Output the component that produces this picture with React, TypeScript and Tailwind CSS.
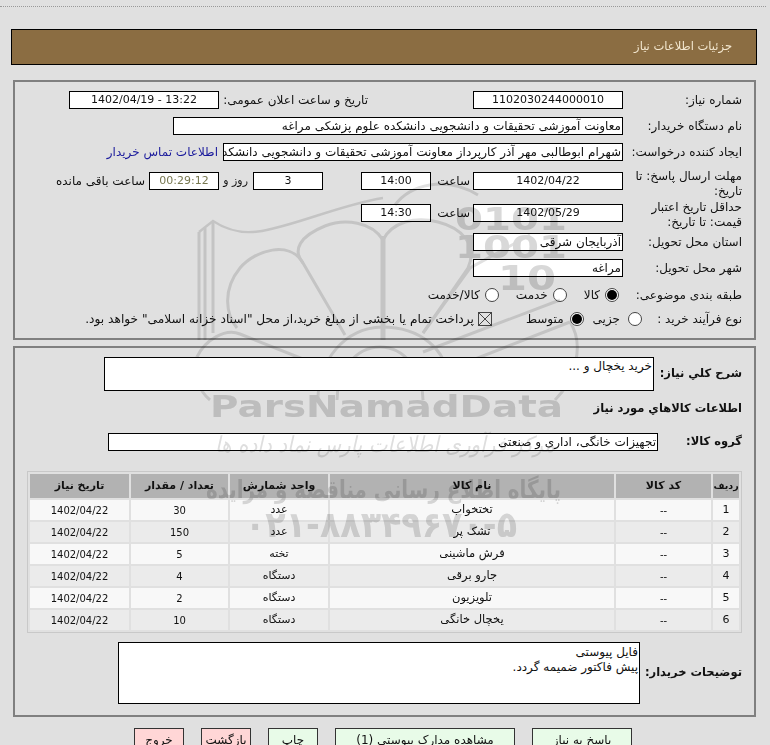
import type { ReactNode } from 'react'

const items = [
  { id: 1, code: '--', name: 'تختخواب', unit: 'عدد', qty: '30', date: '1402/04/22' },
  { id: 2, code: '--', name: 'تشک پر', unit: 'عدد', qty: '150', date: '1402/04/22' },
  { id: 3, code: '--', name: 'فرش ماشینی', unit: 'تخته', qty: '5', date: '1402/04/22' },
  { id: 4, code: '--', name: 'جارو برقی', unit: 'دستگاه', qty: '4', date: '1402/04/22' },
  { id: 5, code: '--', name: 'تلویزیون', unit: 'دستگاه', qty: '2', date: '1402/04/22' },
  { id: 6, code: '--', name: 'یخچال خانگی', unit: 'دستگاه', qty: '10', date: '1402/04/22' },
]

// Sits over the page and multiplies, so it shows through table rows and light fields
function Watermark() {
  return (
    <svg className="pointer-events-none absolute inset-0 z-20 mix-blend-multiply" width="770" height="745" viewBox="0 0 770 745" fill="none">
      <g stroke="#e0e0e0" strokeWidth="3">
        <path d="M199 232V340M205 228V340M213 221V333" />
        <path d="M199 232L213 221C230 232 245 234 262 231C300 224 340 205 383 198" strokeWidth="2.5" />
        <path d="M345 335L303 263C290 240 255 250 240 268C222 290 226 315 237 328" />
        <path d="M383 240C372 222 345 218 325 226C300 236 292 250 303 263" />
        <path d="M383 240C392 222 415 216 438 222C462 228 478 245 468 268L423 333" />
        <path d="M383 236V340" strokeWidth="5" />
        <path d="M318 400C318 360 345 328 382 327C420 327 448 350 447 380" />
        <path d="M337 400C337 372 355 347 380 347C405 347 423 372 423 400" />
        <path d="M197 357C205 340 225 328 240 334L313 363" />
        <path d="M197 357C192 372 198 390 210 400" />
        <path d="M423 352L560 300M447 370L570 322M570 322C585 345 575 380 555 400" />
        <path d="M423 333L470 268L530 235M478 195C445 175 410 185 395 205" />
      </g>
      <g fill="#d8d8d8" fontWeight="700" direction="ltr">
        <text x="455" y="230" fontSize="32" textLength="112" lengthAdjust="spacingAndGlyphs">0101</text>
        <text x="455" y="258" fontSize="32" textLength="112" lengthAdjust="spacingAndGlyphs">1001</text>
        <text x="498" y="290" fontSize="34" textLength="58" lengthAdjust="spacingAndGlyphs">10</text>
        <text x="210" y="417" fontSize="30" textLength="353" lengthAdjust="spacingAndGlyphs">ParsNamadData</text>
      </g>
      <text x="555" y="452" direction="rtl" fill="#dedede" fontSize="22" fontStyle="italic" textLength="340" lengthAdjust="spacingAndGlyphs">مرکز فرآوری اطلاعات پارس نماد داده ها</text>
      <text x="561" y="498" direction="rtl" fill="#dadada" fontSize="25" fontWeight="700" textLength="355" lengthAdjust="spacingAndGlyphs">پایگاه اطلاع رسانی مناقصه و مزایده</text>
      <text x="245" y="537" direction="ltr" fill="#dadada" fontSize="36" fontWeight="700" textLength="272" lengthAdjust="spacingAndGlyphs">۰۲۱-۸۸۳۴۹۶۷۰-۵</text>
    </svg>
  )
}

function Field({ className, children }: { className: string; children?: ReactNode }) {
  return (
    <div className={`h-[18px] shrink-0 overflow-hidden whitespace-nowrap border border-black bg-white px-[1px] leading-[16px] ${className}`}>
      {children}
    </div>
  )
}

function Row({ label, className, labelClass, children }: { label: ReactNode; className: string; labelClass?: string; children?: ReactNode }) {
  return (
    <div className={`flex h-[18px] items-center ${className}`}>
      <div className={`w-[119px] shrink-0 leading-[15px] ${labelClass ?? ''}`}>{label}</div>
      {children}
    </div>
  )
}

function Radio({ checked }: { checked?: boolean }) {
  return (
    <span className="flex h-[14px] w-[14px] shrink-0 items-center justify-center rounded-full border border-[#444] bg-white">
      {checked && <span className="h-[10px] w-[10px] rounded-full bg-black" />}
    </span>
  )
}

export default function App() {
  return (
    <div dir="rtl" className="relative isolate h-[745px] w-[770px] overflow-hidden bg-[#e0e0e0] font-['DejaVu_Sans',sans-serif] text-[12px] text-[#111]">
      <Watermark />
      <div>
        <div className="mr-[4px] h-[7px] border-b border-dotted border-[#999]" />

        {/* Header */}
        <div className="mr-[13px] mt-[22px] flex h-[36px] w-[746px] items-center border border-black bg-[#8b6d42] pr-[24px] text-[11.5px] text-[#f3e7cf]">
          جزئیات اطلاعات نیاز
        </div>

        {/* Main info */}
        <div className="mr-[14px] mt-[15px] h-[260px] w-[743px] border-2 border-[#808080] pr-[12px] pt-[9px]">
          <Row label="شماره نیاز:" className="">
            <Field className="w-[150px] text-center text-[11px]">1102030244000010</Field>
            <div className="mr-[105px] w-[149px] shrink-0 whitespace-nowrap">تاریخ و ساعت اعلان عمومی:</div>
            <Field className="w-[150px] text-center text-[11px]"><span dir="ltr">1402/04/19 - 13:22</span></Field>
          </Row>
          <Row label="نام دستگاه خریدار:" className="mt-[8px]">
            <Field className="w-[450px]">معاونت آموزشی تحقیقات و دانشجویی دانشکده علوم پزشکی مراغه</Field>
          </Row>
          <Row label="ایجاد کننده درخواست:" className="mt-[8px]">
            <Field className="w-[400px]">شهرام ابوطالبی مهر آذر کارپرداز معاونت آموزشی تحقیقات و دانشجویی دانشکده علوم پزشکی مراغه</Field>
            <a className="mr-[5px] whitespace-nowrap text-[#1a1a9c]">اطلاعات تماس خریدار</a>
          </Row>
          <Row label="مهلت ارسال پاسخ: تا تاریخ:" labelClass="mt-[5px]" className="mt-[11px]">
            <Field className="w-[150px] text-center text-[11px]">1402/04/22</Field>
            <div className="w-[42px] shrink-0 pr-[3px]">ساعت</div>
            <Field className="w-[70px] text-center text-[11px]">14:00</Field>
            <div className="w-[38px] shrink-0" />
            <Field className="w-[70px] text-center text-[11px]">3</Field>
            <div className="w-[34px] shrink-0 whitespace-nowrap pr-[5px] text-[11px]">روز و</div>
            <Field className="w-[70px] border-[#bbb] bg-[#efefcf] text-center text-[11px] text-[#77774f]">00:29:12</Field>
            <div className="mr-[4px] whitespace-nowrap">ساعت باقی مانده</div>
          </Row>
          <Row label={<>حداقل تاریخ اعتبار<br />قیمت: تا تاریخ:</>} labelClass="mt-[3px]" className="mt-[14px]">
            <Field className="w-[150px] text-center text-[11px]">1402/05/29</Field>
            <div className="w-[42px] shrink-0 pr-[3px]">ساعت</div>
            <Field className="w-[70px] text-center text-[11px]">14:30</Field>
          </Row>
          <Row label="استان محل تحویل:" className="mt-[11px]">
            <Field className="w-[150px]">آذربایجان شرقی</Field>
          </Row>
          <Row label="شهر محل تحویل:" className="mt-[8px]">
            <Field className="w-[150px]">مراغه</Field>
          </Row>
          <Row label="طبقه بندی موضوعی:" className="mt-[9px]">
            <div className="flex items-center gap-[17px] pr-[4px]">
              <span className="flex items-center gap-[5px]"><Radio checked />کالا</span>
              <span className="flex items-center gap-[5px]"><Radio />خدمت</span>
              <span className="flex items-center gap-[5px]"><Radio />کالا/خدمت</span>
            </div>
          </Row>
          <div className="mt-[6px] flex h-[18px] items-center whitespace-nowrap">
            <div className="w-[100px] shrink-0">نوع فرآیند خرید :</div>
            <span className="flex items-center gap-[8px]"><Radio />جزیی</span>
            <span className="mr-[9px] flex items-center gap-[6px]"><Radio checked />متوسط</span>
            <span className="mr-[34px] flex items-center gap-[4px] text-[12.2px]">
              <svg width="14" height="14" viewBox="0 0 14 14" className="shrink-0" fill="none" stroke="#444">
                <rect x="0.5" y="0.5" width="13" height="13" />
                <path d="M1 1L13 13M13 1L1 13" />
              </svg>
              پرداخت تمام یا بخشی از مبلغ خرید،از محل "اسناد خزانه اسلامی" خواهد بود.
            </span>
          </div>
        </div>

        {/* Need details */}
        <div className="mr-[14px] mt-[6px] h-[371px] w-[743px] border-2 border-[#808080] pr-[12px] pt-[9px]">
          <div className="flex h-[34px] items-center">
            <div className="w-[88px] shrink-0 whitespace-nowrap text-[11.5px] font-bold">شرح کلي نياز:</div>
            <div className="relative z-30 h-[34px] w-[550px] border border-black bg-white px-[1px] leading-[16px]">خرید یخچال و ...</div>
          </div>
          <div className="mt-[9px] h-[16px] text-[11.5px] font-bold leading-[16px]">اطلاعات کالاهاي مورد نياز</div>
          <div className="mt-[17px] flex h-[18px] items-center">
            <div className="w-[84px] shrink-0 text-[11.5px] font-bold">گروه کالا:</div>
            <Field className="w-[550px]">تجهیزات خانگی، اداری و صنعتی</Field>
          </div>

          <table className="mt-[20px] h-[161px] w-[715px] table-fixed border-separate border-spacing-[2px] border border-[#c8c8c8] text-center text-[11.5px]">
            <thead>
              <tr className="h-[24px] bg-[#b2b2b2] text-[11px] font-bold">
                <th className="w-[26px] overflow-hidden text-[9.5px]">رديف</th>
                <th className="w-[95px]">کد کالا</th>
                <th className="w-[284px]">نام کالا</th>
                <th className="w-[98px]">واحد شمارش</th>
                <th className="w-[97px]">تعداد / مقدار</th>
                <th>تاریخ نیاز</th>
              </tr>
            </thead>
            <tbody>
              {items.map((item, i) => (
                <tr key={item.id} className={i % 2 === 0 ? 'h-[20px] bg-[#f8f8f8]' : 'h-[20px] bg-[#ebebeb]'}>
                  <td className="text-[11px]">{item.id}</td>
                  <td className="text-[10px]">{item.code}</td>
                  <td>{item.name}</td>
                  <td className="text-[11px]">{item.unit}</td>
                  <td className="text-[10px]">{item.qty}</td>
                  <td className="text-[10px]">{item.date}</td>
                </tr>
              ))}
            </tbody>
          </table>

          <div className="mt-[9px] flex h-[62px] items-center">
            <div className="w-[102px] shrink-0 whitespace-nowrap text-[11.5px] font-bold">توضیحات خریدار:</div>
            <div className="relative z-30 h-[62px] w-[522px] border border-black bg-white px-[1px] py-[2px] leading-[15px]">
              فایل پیوستی
              <br />
              پیش فاکتور ضمیمه گردد.
            </div>
          </div>
        </div>

        {/* Actions */}
        <div className="mt-[11px] flex gap-[17px] pr-[138px]">
          <button className="h-[24px] w-[100px] shrink-0 border border-[#333] bg-[#e8fbe8]">پاسخ به نیاز</button>
          <button className="h-[24px] w-[180px] shrink-0 border border-[#333] bg-[#e8fbe8]">مشاهده مدارک پیوستی (1)</button>
          <button className="h-[24px] w-[50px] shrink-0 border border-[#333] bg-[#e8fbe8]">چاپ</button>
          <button className="h-[24px] w-[50px] shrink-0 border border-[#333] bg-[#ffd6d6]">بازگشت</button>
          <button className="h-[24px] w-[50px] shrink-0 border border-[#333] bg-[#ffd6d6]">خروج</button>
        </div>
      </div>
    </div>
  )
}
